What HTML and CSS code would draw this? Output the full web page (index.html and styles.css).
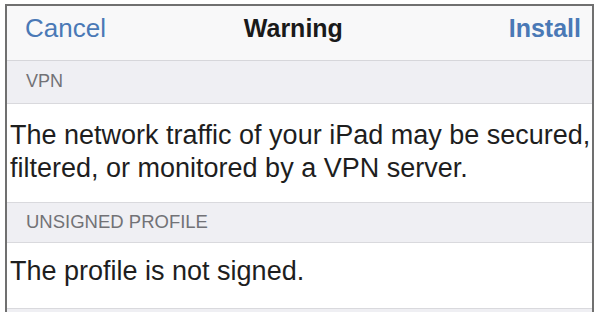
FILE: index.html
```html
<!DOCTYPE html>
<html lang="en">
<head>
  <meta charset="UTF-8">
  <meta name="viewport" content="width=device-width, initial-scale=1.0">
  <title>Warning - Install profile</title>
  <link rel="stylesheet" href="styles.css">
</head>
<body>
  <div class="sheet">
    <header class="nav-bar">
      <a href="#" class="nav-btn">Cancel</a>
      <h1>Warning</h1>
      <a href="#" class="nav-btn nav-done">Install</a>
    </header>

    <section class="group">
      <h2 class="group-title">VPN</h2>
      <p class="cell cell-vpn">The network traffic of your iPad may be secured, filtered, or monitored by a VPN server.</p>
    </section>

    <section class="group">
      <h2 class="group-title group-title-small">UNSIGNED PROFILE</h2>
      <p class="cell cell-signed">The profile is not signed.</p>
    </section>
  </div>
</body>
</html>
```

FILE: styles.css
```css
/* Styles généraux */
body {
  margin: 0;
  padding: 0;
  background-color: #ffffff;
  font-family: "Liberation Sans", Arial, sans-serif;
  color: #1e1e1e;
}

.sheet {
  margin: 4px 2px 0 5px;
  height: 308px;
  box-sizing: border-box;
  border: 2px solid #707070;
  border-bottom: none;
  background-color: #efeff3;
  overflow: hidden;
}

/* Barre de navigation */
.nav-bar {
  display: flex;
  justify-content: space-between;
  align-items: flex-start;
  height: 55px;
  box-sizing: border-box;
  padding: 7px 11px 0 18px;
  background-color: #f8f8f9;
  border-bottom: 1px solid #d6d6da;
  line-height: 30px;
}

.nav-bar h1 {
  margin: 0 0 0 -28px;
  font-size: 25px;
  font-weight: bold;
  color: #1a1a1a;
}

.nav-btn {
  font-size: 26px;
  color: #4a79b6;
  text-decoration: none;
}

.nav-done {
  font-size: 25px;
  font-weight: bold;
}

/* Groupes */
.group-title {
  margin: 0;
  display: flex;
  align-items: flex-end;
  height: 43px;
  box-sizing: border-box;
  padding: 0 0 11px 19px;
  font-size: 18px;
  font-weight: normal;
  line-height: 22px;
  color: #727276;
  border-bottom: 1px solid #d9d9dd;
}

.group-title-small {
  height: 40px;
  padding-bottom: 9px;
  font-size: 18.5px;
}

.cell {
  margin: 0;
  padding: 0 0 0 3px;
  background-color: #ffffff;
  font-size: 27px;
  line-height: 33px;
  border-bottom: 1px solid #d9d9dd;
}

.cell-vpn {
  height: 99px;
  box-sizing: border-box;
  padding-top: 15px;
}

.cell-signed {
  height: 66px;
  box-sizing: border-box;
  padding-top: 12px;
}
```
